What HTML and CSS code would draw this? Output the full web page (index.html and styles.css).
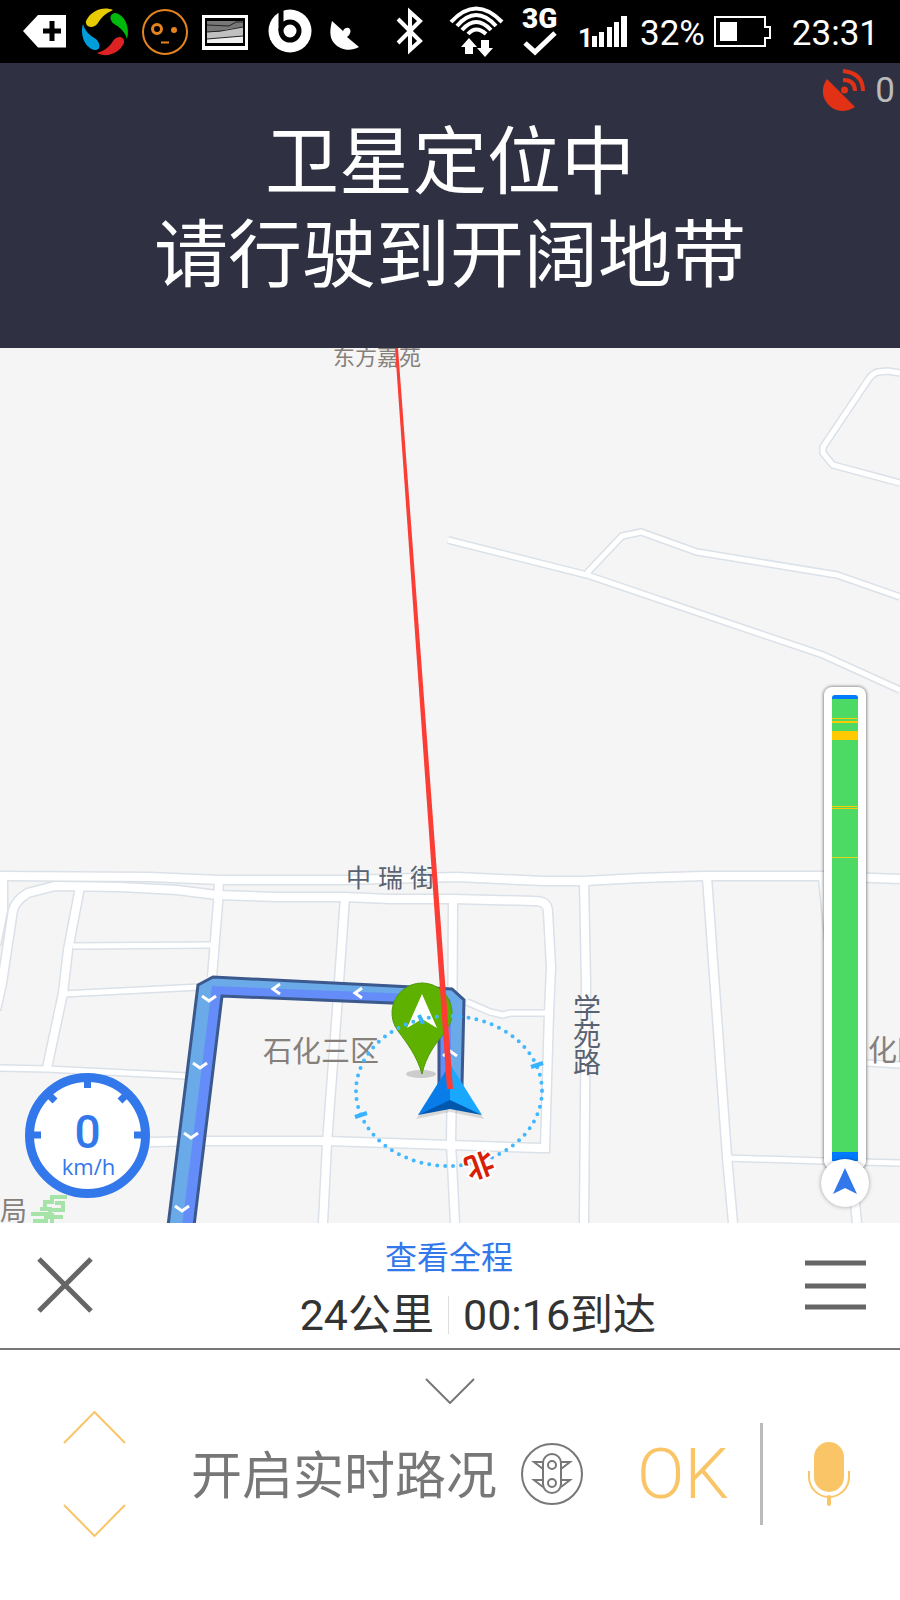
FILE: index.html
```html
<!DOCTYPE html>
<html lang="zh-CN">
<head>
  <meta charset="UTF-8" />
  <meta name="viewport" content="width=device-width, initial-scale=1.0"/>
  <title>导航</title>
  <link rel="stylesheet" href="styles.css">
</head>
<body>
  <header class="status-bar">
    <svg class="status-icon" viewBox="22 0 60 63">
      <path d="M23 31L38 15H66V47.500H38Z" fill="#fff"/>
      <path d="M52 21V41M43 31H61" stroke="#000" stroke-width="5"/>
    </svg>
    <svg class="status-icon" viewBox="82 0 60 63">
      <path d="M113 10C104 6 91 10 86 21C85 28 94 29 98 23C102 16 107 13 113 10Z" fill="#e8cb00"/>
      <path d="M127 39C130 29 126 16 116 13C109 13 109 20 114 24C121 28 125 32 127 39Z" fill="#00b90c"/>
      <path d="M97 53C106 58 119 54 124 43C125 36 117 35 113 41C109 48 103 51 97 53Z" fill="#dc2222"/>
      <path d="M83 24C80 34 84 47 94 50C101 51 101 44 96 39C89 35 85 31 83 24Z" fill="#009dda"/>
    </svg>
    <svg class="status-icon" viewBox="142 0 60 63" fill="none" stroke="#e5841f" stroke-width="2">
      <circle cx="165" cy="32" r="22"/>
      <circle cx="157" cy="29" r="4.500" stroke-width="3"/>
      <circle cx="174" cy="30" r="2" fill="#e5841f"/>
      <path d="M161 42.500H169"/>
    </svg>
    <svg class="status-icon" viewBox="202 0 60 63">
      <path d="M202 15H248V50H202Z" fill="#fff"/>
      <path d="M205 18H245V46H205Z"/>
      <path d="M207 21H243V43H207Z" fill="#c0c0c0"/>
      <path d="M207 21H243V27L227 29L218 32H207Z" fill="#777"/>
      <path d="M207 39L243 36V43H207Z" fill="#eee"/>
      <path d="M207 25L229 26L236 22H243M207 32L221 31L243 27M207 39L243 36" stroke="#222" fill="none"/>
    </svg>
    <svg class="status-icon" viewBox="262 0 60 63">
      <circle cx="290" cy="31" r="21.500" fill="#fff"/>
      <path d="M281 6V31" stroke="#000" stroke-width="5"/>
      <circle cx="290" cy="31" r="9" fill="#fff" stroke="#000" stroke-width="5"/>
    </svg>
    <svg class="status-icon" viewBox="322 0 60 63" fill="#fff">
      <path d="M332 21L343 31Q345 27 349 28Q353 32 347 37L359 47C350 52 340 50 334 43C329 37 330 29 332 21Z"/>
    </svg>
    <svg class="status-icon" viewBox="382 0 60 63" fill="none" stroke="#fff">
      <path d="M398 19L420 41L410 50V12L420 21L398 43" stroke-width="4"/>
    </svg>
    <svg class="status-icon" viewBox="442 0 60 63" fill="none" stroke="#fff" stroke-width="4">
      <path d="M451 22Q476 -5 502 22M457 26Q476 4 496 26M462 30Q476 14 491 30M468 34Q476 25 486 34"/>
      <path d="M469 38L477 47H473V54H465V47H461ZM485 57L477 48H481V40H489V48H493Z" fill="#fff" stroke="none"/>
    </svg>
    <svg class="status-icon" viewBox="502 0 60 63">
      <text x="522" y="28" class="network">3G</text>
      <path d="M525 43L535 52L555 33" fill="none" stroke="#fff" stroke-width="5"/>
    </svg>
    <svg class="status-icon signal" viewBox="562 0 70 63">
      <text x="578" y="47" class="sim">1</text>
      <path d="M592 36h5v11h-5zM599 32h5v15h-5zM607 27h5v20h-5zM614 22h5v25h-5zM621 16h6v31h-6z" fill="#fff"/>
    </svg>
    <span class="percent">32%</span>
    <svg class="battery" viewBox="714 16 58 31">
      <path d="M715 17H765V27H770V38H765V46H715Z" fill="none" stroke="#fff" stroke-width="2"/>
      <path d="M720 22H737V41H720Z" fill="#fff"/>
    </svg>
    <time class="clock">23:31</time>
  </header>

  <section class="banner">
    <div class="satellite">
      <svg viewBox="823 70 43 43" width="43" height="43">
        <path d="M827 80L855 108C844 115 833 112 827 104C821 96 822 87 827 80Z" fill="#e23115"/>
        <circle cx="844.500" cy="91" r="3.500" fill="#e23115"/>
        <path d="M843 81Q855 81 855 92M843 72Q863 74 863 92" fill="none" stroke="#e23115" stroke-width="4"/>
      </svg>
      <span>0</span>
    </div>
    <h1>卫星定位中<br>请行驶到开阔地带</h1>
  </section>

  <main class="map">
    <svg class="map-canvas" viewBox="0 348 900 875">
      <defs>
        <g id="streets">
          <path d="M0 876L150 877L220 880H345L457 877L543 881H585L640 878L703 876H820L900 879"/>
          <path d="M3 876V910L-4 945"/>
          <path d="M-4 1010L2 983L13 910Q16 900 28 893L55 886L120 887L177 890L217 895L277 897H345L390 899H453L535 901Q548 901 548 912L551 967L549 1013L545 1148H540L450 1145L327 1141H207L150 1142"/>
          <path d="M80 887L68 950L63 993L47 1068M219 880L218 903L212 977"/>
          <path d="M345 897L337 1010L327 1143L323 1223M453 899L452 1083L451 1143L455 1223"/>
          <path d="M584 881L586 983L584 1223M707 877L717 1017L727 1157L733 1223"/>
          <path d="M823 877L857 1223"/>
        </g>
        <g id="lanes">
          <path d="M73 946L212 945M63 994L200 987M0 1068L47 1069L187 1076"/>
          <path d="M467 1002L490 1012L503 1015L510 1013H548M727 1158L823 1161L900 1163M867 1063L900 1065"/>
          <path d="M448 540L587 575L693 611L823 655L900 690"/>
          <path d="M587 573L622 536L641 532L697 552L837 575L900 597"/>
          <path d="M900 373L888 371L878 372Q873 373 868 380L823 447V453L833 465L900 483"/>
        </g>
      </defs>

      <rect y="348" width="900" height="875" fill="#f5f5f5"/>
      <g class="casing"><use href="#streets" stroke-width="11"/><use href="#lanes" stroke-width="8"/></g>
      <g class="surface"><use href="#streets" stroke-width="8"/><use href="#lanes" stroke-width="5"/></g>

      <text class="label" x="333" y="365" font-size="22">东方嘉苑</text>
      <text class="label street" x="346 378 410" y="887" font-size="25">中瑞街</text>
      <text class="label" x="263" y="1062" font-size="29">石化三区</text>
      <text class="label street" font-size="28"><tspan x="573" y="1019">学</tspan><tspan x="573" y="1046">苑</tspan><tspan x="573" y="1073">路</tspan></text>
      <text class="label" x="868" y="1061" font-size="29">化四区</text>
      <text class="label" x="0" y="1221" font-size="27">局</text>
      <path d="M45 1208V1202H52V1197H67M48 1210H63V1203H55M31 1214H46V1221H33M40 1209H50V1217H63M52 1223V1213" fill="none" stroke="#a5e3a8" stroke-width="4"/>

      <!-- route -->
      <path d="M198 985L213 977L452 989L464 1000L462 1085H439V1005L222 996L194 1226H168Z" fill="#648dfa"/>
      <path d="M198 985L213 977L452 989L464 1000L462 1085H451V1000L440 995L212 986L182 1226H168Z" fill="#6aaae8"/>
      <path d="M198 985L213 977L452 989L464 1000L462 1085H439V1005L222 996L194 1226H168Z" fill="none" stroke="#3b598c" stroke-width="3"/>
      <g class="chevrons">
        <path d="M202 996L209 1001L216 996M193 1063L200 1068L207 1063M184 1133L191 1138L198 1133M175 1206L182 1211L189 1206"/>
        <path d="M280 984L273 989L280 994M362 988L355 993L362 998M443 1056L450 1051L457 1056"/>
      </g>

      <!-- start pin -->
      <ellipse cx="421" cy="1074" rx="15" ry="4" fill="#ccc"/>
      <path d="M422 1074C417 1056 407 1043 398 1031A30 30 0 1 1 446 1031C435 1044 426 1056 422 1074Z" fill="#5fb100" stroke="#4f9a08"/>
      <path d="M422 994L437 1028L422 1019L407 1028Z" fill="#fff"/>

      <!-- compass ring -->
      <ellipse class="ring" cx="449" cy="1091" rx="93" ry="75"/>
      <path d="M419 1015L423 1024M531 1067L543 1063M355 1117L367 1113" stroke="#37b3ff" stroke-width="4"/>
      <text class="north" transform="translate(479 1164) rotate(160)" y="9">北</text>

      <path d="M450 1069L484 1119L450 1112L416 1119Z" fill="#000" opacity=".12"/>
      <path d="M450 1064L418 1115L450 1103Z" fill="#087de9"/>
      <path d="M450 1064L482 1115L450 1103Z" fill="#1aa8ff"/>
      <path d="M418 1115L450 1100L482 1115L450 1109Z" fill="#0058ae"/>
      <path d="M395 348H398L453 1089H447Z" fill="#fb3d36"/>
    </svg>

    <svg class="speed" viewBox="0 0 125 125">
      <circle cx="62.500" cy="62.500" r="58" fill="#fff" stroke="#3378ea" stroke-width="9"/>
      <path d="M62.500 5V15M5 62H16M109 62H120M23 21L30 28M102 21L95 28" stroke="#3378ea" stroke-width="7"/>
      <text x="62.500" y="75" class="speed-value">0</text>
      <text x="63.500" y="102" class="speed-unit">km/h</text>
    </svg>

    <div class="traffic">
      <div class="traffic-track"></div>
      <svg class="traffic-car" viewBox="0 0 48 48">
        <path d="M24 9L36 35L24 29L12 35Z" fill="#3378ea"/>
      </svg>
    </div>
  </main>

  <section class="trip">
    <button class="icon-button" aria-label="退出">
      <svg viewBox="0 0 56 56" width="56" height="56"><path d="M2 2L54 54M54 2L2 54"/></svg>
    </button>
    <div class="trip-info">
      <a href="#">查看全程</a>
      <div class="trip-stats">
        <span class="distance">24公里</span>
        <span class="arrival">00:16到达</span>
      </div>
    </div>
    <button class="icon-button" aria-label="菜单">
      <svg viewBox="0 0 61 50" width="61" height="50"><path d="M0 3H61M0 26H61M0 47H61"/></svg>
    </button>
  </section>

  <section class="assistant">
    <button class="collapse" aria-label="收起">
      <svg viewBox="0 0 50 26" width="50" height="26"><path d="M1 1L25 25L49 1"/></svg>
    </button>
    <div class="command">
      <div class="stepper">
        <button aria-label="上一条"><svg viewBox="0 0 63 33" width="63" height="33"><path d="M1 32L31.500 1L62 32"/></svg></button>
        <button aria-label="下一条"><svg viewBox="0 0 63 33" width="63" height="33"><path d="M1 1L31.500 32L62 1"/></svg></button>
      </div>
      <span class="command-text">开启实时路况</span>
      <svg class="traffic-light" viewBox="0 0 62 62" width="62" height="62">
        <circle cx="31" cy="31" r="30"/>
        <rect x="22" y="11" width="18" height="39" rx="9"/>
        <circle cx="31" cy="22" r="4"/>
        <circle cx="31" cy="40" r="4"/>
        <path d="M22 19H13L22 26M22 37H13L22 44M40 19H49L40 26M40 37H49L40 44"/>
      </svg>
      <button class="ok">OK</button>
      <span class="divider"></span>
      <button class="mic" aria-label="语音">
        <svg viewBox="0 0 42 64" width="42" height="64">
          <rect x="6" y="0" width="30" height="50" rx="15" fill="#f9c567"/>
          <path d="M1 29V35A20 20 0 0 0 41 35V29" fill="none" stroke="#f9c567" stroke-width="2"/>
          <path d="M21 55V62" stroke="#f9c567" stroke-width="4" stroke-linecap="round"/>
        </svg>
      </button>
    </div>
  </section>
</body>
</html>
```
FILE: styles.css
```css
:root {
  --blue: #3378ea;
  --amber: #f9c567;
  --grey: #777;
  --banner: #2f3142;
}

* {
  box-sizing: border-box;
}

body {
  margin: 0;
  background: #fff;
  color: #333;
  font-family: Roboto, 'Noto Sans CJK SC', sans-serif;
}

button {
  display: block;
  padding: 0;
  border: none;
  background: none;
  font-family: inherit;
  cursor: pointer;
}

svg {
  display: block;
  flex-shrink: 0;
}

/* status bar */
.status-bar {
  display: flex;
  align-items: center;
  height: 63px;
  padding: 0 21px 0 22px;
  background: #000;
  color: #fff;
  font-size: 35px;
}

.status-icon {
  width: 60px;
  height: 63px;
  overflow: visible;
}

.signal {
  width: 70px;
}

.network {
  font-size: 28px;
  font-weight: 900;
  fill: #fff;
}

.sim {
  font-size: 26px;
  font-weight: 700;
  fill: #fff;
}

.percent {
  margin: 4px 9px 0 8px;
}

.battery {
  width: 58px;
  height: 31px;
}

.clock {
  margin: 4px 0 0 auto;
}

/* banner */
.banner {
  position: relative;
  min-height: 285px;
  padding: 53px 20px 46px;
  background: var(--banner);
}

.banner h1 {
  margin: 0;
  color: #fff;
  font-size: 74px;
  font-weight: 400;
  line-height: 93px;
  text-align: center;
}

.satellite {
  position: absolute;
  top: 6px;
  right: 5px;
  display: flex;
  align-items: center;
  gap: 9px;
  color: #bbb;
  font-size: 35px;
}

/* map */
.map {
  position: relative;
  overflow: hidden;
  background: #f5f5f5;
}

.map-canvas {
  width: 100%;
  height: auto;
}

.casing {
  fill: none;
  stroke: #dbe1e8;
}

.surface {
  fill: none;
  stroke: #fff;
}

.label {
  fill: #85807c;
  font-family: 'Noto Sans CJK SC', sans-serif;
}

.street {
  fill: #596270;
}

.chevrons {
  fill: none;
  stroke: #fff;
  stroke-width: 3;
}

.ring {
  fill: none;
  stroke: #43b8ff;
  stroke-width: 4;
  stroke-linecap: round;
  stroke-dasharray: 0 8;
}

.north {
  fill: #d81e06;
  stroke: #fff;
  stroke-width: 4;
  paint-order: stroke;
  font-family: 'Noto Sans CJK SC', sans-serif;
  font-size: 29px;
  font-weight: 700;
  text-anchor: middle;
}

.speed {
  position: absolute;
  left: 25px;
  bottom: 25px;
  width: 125px;
  height: 125px;
}

.speed-value {
  fill: var(--blue);
  font-size: 46px;
  font-weight: 500;
  text-anchor: middle;
}

.speed-unit {
  fill: var(--blue);
  font-family: 'Open Sans', sans-serif;
  font-size: 22px;
  font-weight: 500;
  text-anchor: middle;
}

.traffic {
  position: absolute;
  right: 31px;
  bottom: 16px;
  display: flex;
  flex-direction: column;
  align-items: center;
}

.traffic-track {
  width: 42px;
  height: 482px;
  padding: 8px;
  border-radius: 8px;
  background: #fff;
  box-shadow: 0 0 3px 1px rgba(0, 0, 0, 0.4);
}

.traffic-track::before {
  content: '';
  display: block;
  height: 100%;
  border-radius: 3px 3px 0 0;
  background:
    linear-gradient(#007aff, #007aff) 0 0 / 100% 4px,
    linear-gradient(#ffcb00, #ffcb00) 0 23px / 100% 1px,
    linear-gradient(#ffcb00, #ffcb00) 0 26px / 100% 2px,
    linear-gradient(#ffcb00, #ffcb00) 0 36px / 100% 9px,
    linear-gradient(#ffcb00, #ffcb00) 0 111px / 100% 1px,
    linear-gradient(#ffcb00, #ffcb00) 0 113px / 100% 1px,
    linear-gradient(#e0d71e, #e0d71e) 0 162px / 100% 1px,
    linear-gradient(#007aff, #007aff) 0 100% / 100% 9px,
    #4cda64;
  background-repeat: no-repeat;
}

.traffic-car {
  width: 48px;
  height: 48px;
  margin-top: -10px;
  border-radius: 50%;
  background: #fff;
  box-shadow: 0 0 4px rgba(0, 0, 0, 0.35);
}

/* trip summary */
.trip {
  display: flex;
  align-items: center;
  justify-content: space-between;
  min-height: 127px;
  padding: 0 34px 2px 37px;
  border-bottom: 2px solid #777;
}

.icon-button svg {
  fill: none;
  stroke: #666;
  stroke-width: 5;
}

.trip-info {
  flex: 1;
  padding-bottom: 2px;
  text-align: center;
}

.trip-info a {
  display: block;
  color: var(--blue);
  font-size: 32px;
  line-height: 48px;
  text-decoration: none;
}

.trip-stats {
  display: grid;
  grid-template-columns: 1fr 1fr;
  margin-top: 14px;
  font-size: 43px;
  line-height: 38px;
}

.distance {
  padding-right: 14px;
  border-right: 1px solid #ddd;
  text-align: right;
}

.arrival {
  padding-left: 14px;
  text-align: left;
}

/* voice assistant */
.assistant {
  padding: 28px 0 63px;
}

.collapse {
  margin: 0 auto 7px;
}

.collapse svg {
  fill: none;
  stroke: var(--grey);
  stroke-width: 2;
}

.command {
  display: flex;
  align-items: center;
  padding: 0 50px 0 63px;
}

.stepper {
  display: grid;
  gap: 60px;
}

.stepper svg {
  fill: none;
  stroke: var(--amber);
  stroke-width: 2;
}

.command-text {
  margin: 0 24px 4px 65px;
  color: var(--grey);
  font-size: 51px;
}

.traffic-light {
  fill: none;
  stroke: var(--grey);
  stroke-width: 2;
}

.ok {
  margin-left: 54px;
  color: var(--amber);
  font-size: 70px;
  font-weight: 300;
  line-height: 80px;
}

.divider {
  width: 3px;
  height: 102px;
  margin: 0 45px 0 auto;
  background: #bbb;
}
```
